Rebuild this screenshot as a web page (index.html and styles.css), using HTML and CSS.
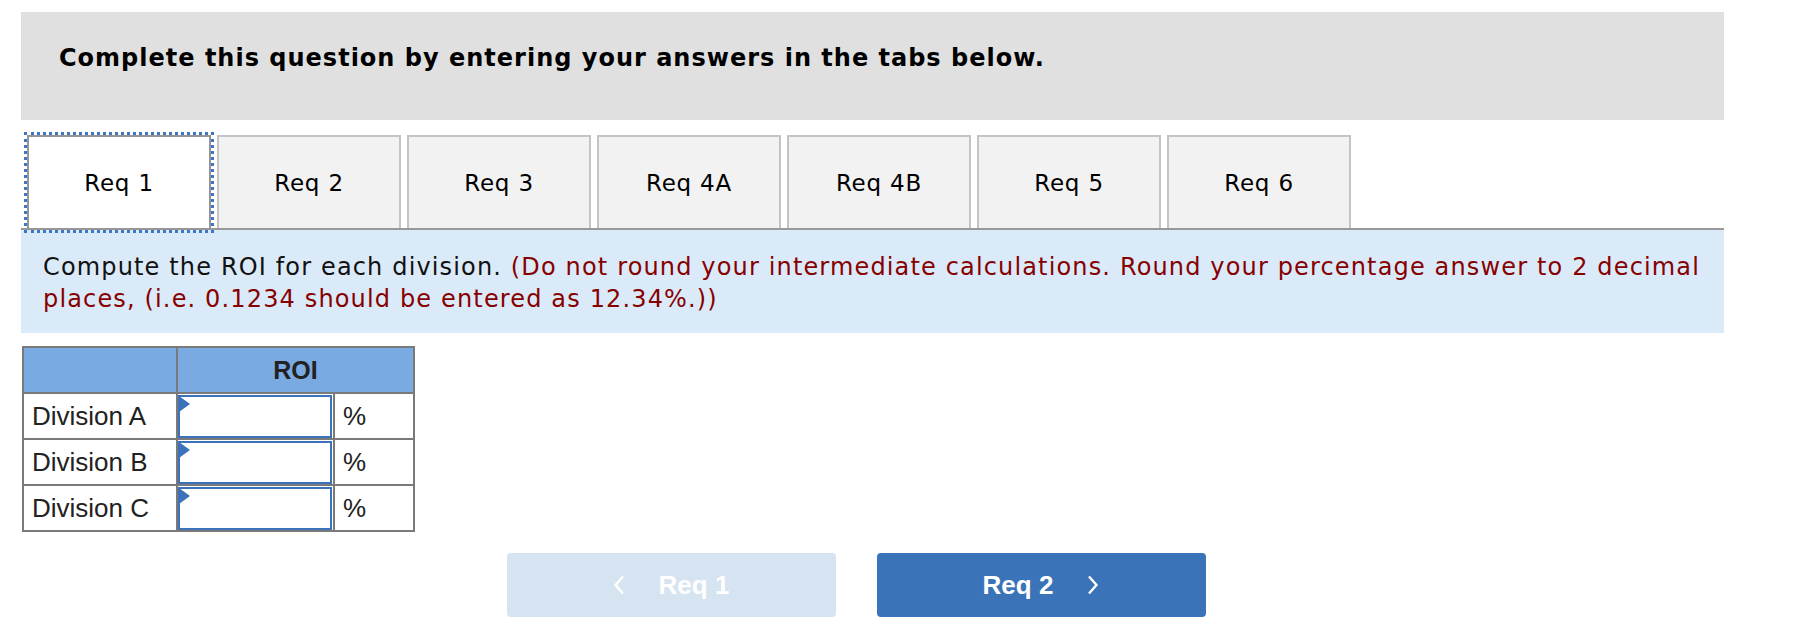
FILE: index.html
```html
<!DOCTYPE html>
<html>
<head>
<meta charset="utf-8">
<link rel="stylesheet" href="styles.css">
</head>
<body>
<div class="page">
  <div class="prompt">Complete this question by entering your answers in the tabs below.</div>

  <div class="tabs">
    <div class="tab active">Req 1</div>
    <div class="tab">Req 2</div>
    <div class="tab">Req 3</div>
    <div class="tab">Req 4A</div>
    <div class="tab">Req 4B</div>
    <div class="tab">Req 5</div>
    <div class="tab">Req 6</div>
  </div>

  <p class="instructions"><span class="lead">Compute the ROI for each division.</span> <span class="hint">(Do not round your intermediate calculations. Round your percentage answer to 2 decimal places, (i.e. 0.1234 should be entered as 12.34%.))</span></p>

  <table class="roi">
    <tr class="head">
      <th class="c1"></th>
      <th colspan="2">ROI</th>
    </tr>
    <tr>
      <td class="c1">Division A</td>
      <td class="c2"><div class="field"></div></td>
      <td class="c3">%</td>
    </tr>
    <tr>
      <td class="c1">Division B</td>
      <td class="c2"><div class="field"></div></td>
      <td class="c3">%</td>
    </tr>
    <tr>
      <td class="c1">Division C</td>
      <td class="c2"><div class="field"></div></td>
      <td class="c3">%</td>
    </tr>
  </table>

  <div class="nav">
    <div class="btn prev">
      <svg class="chev" width="12" height="20" viewBox="0 0 12 20"><path d="M10 1.5 L2.5 10 L10 18.5" fill="none" stroke="#fff" stroke-width="2.4"/></svg>
      <span>Req 1</span>
    </div>
    <div class="btn next">
      <span>Req 2</span>
      <svg class="chev" width="12" height="20" viewBox="0 0 12 20"><path d="M2 1.5 L9.5 10 L2 18.5" fill="none" stroke="#fff" stroke-width="2.4"/></svg>
    </div>
  </div>
</div>
</body>
</html>
```

FILE: styles.css
```css
html, body {
  margin: 0;
  padding: 0;
  background: #ffffff;
}

.page {
  width: 1703px;
  margin-left: 21px;
  padding-top: 12px;
}

.prompt {
  background: #e0e0e0;
  height: 108px;
  box-sizing: border-box;
  padding: 32px 0 0 38px;
  font-family: "DejaVu Sans", Verdana, sans-serif;
  font-weight: bold;
  font-size: 24px;
  letter-spacing: 1px;
  line-height: 28px;
  color: #000;
}

.tabs {
  display: flex;
  gap: 6px;
  margin-top: 15px;
  padding-left: 6px;
  border-bottom: 2px solid #999999;
}

.tab {
  width: 184px;
  height: 93px;
  box-sizing: border-box;
  background: #f2f2f2;
  border: 2px solid #c4c4c4;
  border-bottom: none;
  display: flex;
  align-items: center;
  justify-content: center;
  font-family: "DejaVu Sans", Verdana, sans-serif;
  font-size: 23px;
  letter-spacing: 0.8px;
  color: #000;
}

.tab.active {
  background: #ffffff;
  border: 2px solid #959595;
  height: 95px;
  margin-bottom: -2px;
  outline: 3px dotted #3d76c6;
  outline-offset: 0px;
}

.instructions {
  margin: 0;
  background: #dbeaf8;
  height: 103px;
  box-sizing: border-box;
  padding: 21px 18px 0 22px;
  font-family: "DejaVu Sans", Verdana, sans-serif;
  font-size: 24px;
  letter-spacing: 1.15px;
  line-height: 32px;
}

.lead {
  color: #111;
}

.hint {
  color: #870000;
}

.roi {
  margin-top: 13px;
  margin-left: 1px;
  border-collapse: collapse;
  font-family: "Liberation Sans", Arial, sans-serif;
  font-size: 26px;
  color: #222;
}

.roi th, .roi td {
  border: 2px solid #7a7a7a;
  padding: 0;
}

.roi .head th {
  background: #79aae1;
  height: 44px;
  font-size: 25px;
  font-weight: bold;
  text-align: center;
  color: #222;
}

.roi td {
  height: 44px;
}

.roi .c1 {
  width: 144px;
  padding-left: 8px;
  text-align: left;
}

.roi .c2 {
  width: 155px;
  padding: 0;
}

.roi .c3 {
  width: 70px;
  padding-left: 8px;
}

.field {
  position: relative;
  height: 43px;
  box-sizing: border-box;
  margin: 0 1px 0 0;
  border: 2px solid #3b72b9;
  background: #fff;
}

.field::before {
  content: "";
  position: absolute;
  left: -1px;
  top: -1px;
  border-left: 11px solid #3b72b9;
  border-top: 8px solid transparent;
  border-bottom: 8px solid transparent;
  width: 0;
  height: 0;
}

.nav {
  display: flex;
  justify-content: center;
  gap: 41px;
  margin-top: 21px;
  padding-right: 33px;
}

.btn {
  width: 329px;
  height: 64px;
  border-radius: 4px;
  display: flex;
  align-items: center;
  justify-content: center;
  gap: 34px;
  font-family: "Liberation Sans", Arial, sans-serif;
  font-weight: bold;
  font-size: 26px;
  color: #ffffff;
}

.btn.prev {
  background: #d6e3f1;
}

.btn.next {
  background: #3b73b9;
}

.chev {
  display: block;
}
```
